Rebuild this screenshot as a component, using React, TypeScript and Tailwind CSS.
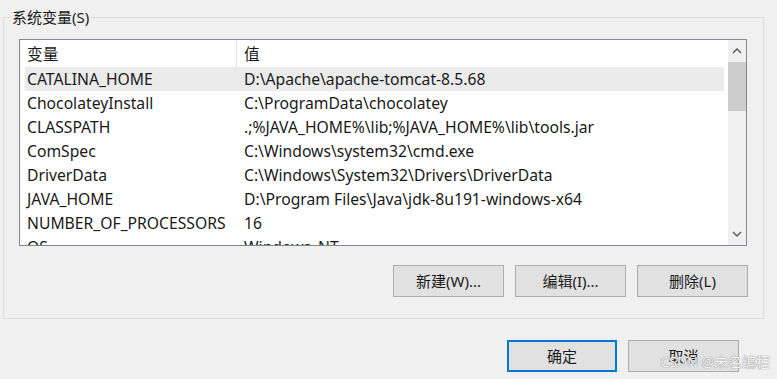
const rows: [string, string][] = [
    ["CATALINA_HOME", "D:\\Apache\\apache-tomcat-8.5.68"],
    ["ChocolateyInstall", "C:\\ProgramData\\chocolatey"],
    ["CLASSPATH", ".;%JAVA_HOME%\\lib;%JAVA_HOME%\\lib\\tools.jar"],
    ["ComSpec", "C:\\Windows\\system32\\cmd.exe"],
    ["DriverData", "C:\\Windows\\System32\\Drivers\\DriverData"],
    ["JAVA_HOME", "D:\\Program Files\\Java\\jdk-8u191-windows-x64"],
    ["NUMBER_OF_PROCESSORS", "16"],
    ["OS", "Windows_NT"],
];

const font = "font-['Noto_Sans','Noto_Sans_CJK_SC',sans-serif]";

const Chevron = ({ up }: { up?: boolean }) => (
    <svg width="10" height="6" viewBox="0 0 10 6" className={up ? "" : "rotate-180"}>
        <path d="M1 5 L5 1 L9 5" fill="none" stroke="#606060" strokeWidth="1.5" />
    </svg>
);

const Btn = ({ label, primary }: { label: string; primary?: boolean }) => (
    <button
        className={`h-[32px] bg-[#e1e1e1] text-[15px] text-[#1a1a1a] ${
            primary ? "w-[110px] border-2 border-[#0078d7]" : "w-[111px] border border-[#adadad]"
        }`}
    >
        {label}
    </button>
);

export default function App() {
    return (
        <div className={`relative w-[777px] h-[379px] bg-[#f0f0f0] overflow-hidden ${font}`}>
            <fieldset className="ml-[3px] mt-[7px] w-[761px] h-[312px] border border-[#dcdcdc]">
                <legend className="ml-[7px] px-[1px] text-[15px] leading-[20px] text-[#1a1a1a]">
                    系统变量(S)
                </legend>
                <div className="ml-[15px] mt-[12px] w-[728px] h-[207px] border border-[#828790] bg-white flex">
                    <div className="flex-1 overflow-hidden text-[15.7px] text-[#1a1a1a]">
                        <div className="flex h-[27px] items-center">
                            <div className="w-[217px] h-full pl-[7px] pt-[3px] flex items-center border-r border-[#e5e5e5]">
                                变量
                            </div>
                            <div className="pl-[7px] pt-[3px]">值</div>
                        </div>
                        {rows.map(([k, v], i) => (
                            <div
                                key={k}
                                className={`flex h-[24px] items-center pt-[2px] ml-[5px] mr-[4px] ${
                                    i == 0 ? "bg-[#ebebeb]" : ""
                                }`}
                            >
                                <div className="w-[212px] pl-[2px] whitespace-nowrap">{k}</div>
                                <div className="pl-[7px] whitespace-nowrap">{v}</div>
                            </div>
                        ))}
                    </div>
                    <div className="w-[18px] bg-[#f0f0f0] flex flex-col items-center">
                        <div className="h-[22px] flex items-center justify-center">
                            <Chevron up />
                        </div>
                        <div className="w-[18px] h-[49px] bg-[#cdcdcd]" />
                        <div className="flex-1" />
                        <div className="h-[22px] flex items-center justify-center">
                            <Chevron />
                        </div>
                    </div>
                </div>
                <div className="flex justify-end gap-[11px] mt-[19px] mr-[15px]">
                    <Btn label="新建(W)..." />
                    <Btn label="编辑(I)..." />
                    <Btn label="删除(L)" />
                </div>
            </fieldset>
            <div className="flex justify-end gap-[11px] mt-[21px] mr-[38px]">
                <Btn label="确定" primary />
                <Btn label="取消" />
            </div>
            <div className="absolute right-[7px] bottom-[7px] text-[14px] text-[#f4f4f4] [text-shadow:0_0_1px_#8c8c8c,0_0_1px_#8c8c8c]">
                CSDN @未名编程
            </div>
        </div>
    );
}
